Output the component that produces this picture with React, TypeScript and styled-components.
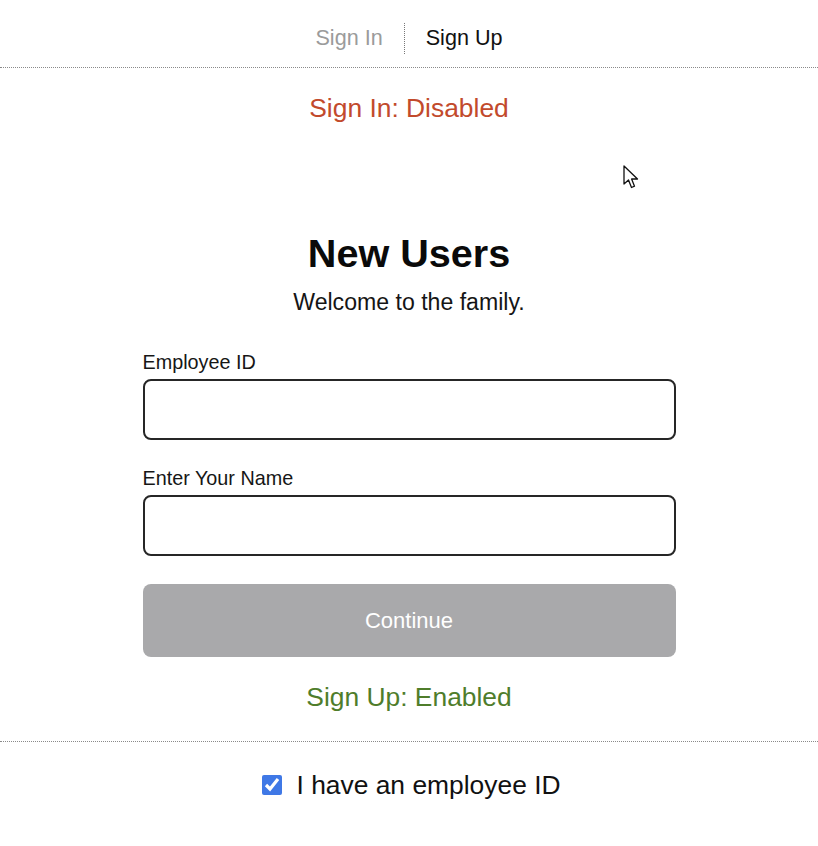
import React, { useState } from "react";
import styled, { createGlobalStyle } from "styled-components";

const Global = createGlobalStyle`
  html, body { margin: 0; padding: 0; background: #ffffff; }
  body { font-family: "Liberation Sans", Arial, sans-serif; color: #111; }
  * { box-sizing: border-box; }
`;

const Page = styled.div`
  position: relative;
  width: 818px;
  min-height: 846px;
  display: flex;
  flex-direction: column;
  align-items: stretch;
`;

const TabBar = styled.nav`
  height: 68px;
  padding-top: 9px;
  display: flex;
  justify-content: center;
  align-items: center;
  border-bottom: 1px dotted #8a8a8a;
`;

const Tab = styled.span<{ $active?: boolean }>`
  font-size: 21.6px;
  line-height: 26px;
  padding: 0 21px;
  color: ${(p) => (p.$active ? "#111111" : "#9b9b9b")};
`;

const TabDivider = styled.span`
  width: 0;
  height: 31px;
  border-left: 1px dotted #777;
`;

const Status = styled.div<{ $tone: "red" | "green" }>`
  text-align: center;
  font-size: 26.4px;
  line-height: 30px;
  color: ${(p) => (p.$tone === "red" ? "#c24a2c" : "#4f7d2b")};
`;

const Main = styled.main`
  display: flex;
  flex-direction: column;
  align-items: center;
  padding-top: 25px;
  padding-bottom: 29px;
  border-bottom: 1px dotted #8a8a8a;
`;

const Title = styled.h1`
  margin: 107px 0 0;
  font-size: 39.6px;
  line-height: 46px;
  font-weight: 700;
  color: #0a0a0a;
`;

const Subtitle = styled.p`
  margin: 13px 0 0;
  font-size: 23.1px;
  line-height: 26px;
  color: #151515;
`;

const Form = styled.form`
  width: 533px;
  margin-top: 36px;
  display: flex;
  flex-direction: column;
`;

const Field = styled.label`
  display: flex;
  flex-direction: column;
  gap: 5px;
  margin-bottom: 27px;
`;

const FieldLabel = styled.span`
  font-size: 19.8px;
  line-height: 23px;
  color: #161616;
`;

const Input = styled.input`
  height: 61px;
  width: 100%;
  border: 2px solid #262626;
  border-radius: 8px;
  background: #fff;
  font-size: 20px;
  padding: 0 14px;
  outline: none;
`;

const Button = styled.button`
  height: 73px;
  width: 100%;
  margin-top: 1px;
  border: none;
  border-radius: 8px;
  background: #a9a9ab;
  color: #ffffff;
  font-family: "Liberation Sans", Arial, sans-serif;
  font-size: 22px;
  cursor: default;
`;

const StatusSpacer = styled.div`
  height: 25px;
`;

const CheckRow = styled.label`
  display: flex;
  justify-content: center;
  align-items: center;
  gap: 14px;
  height: 86px;
  padding-left: 5px;
  font-size: 26.4px;
  color: #111;
`;

const Check = styled.input`
  width: 20px;
  height: 20px;
  margin: 0;
  accent-color: #3f78e6;
`;

const Cursor = styled.svg`
  position: absolute;
  left: 623px;
  top: 165px;
  width: 18px;
  height: 26px;
  pointer-events: none;
`;

export default function App() {
  const [hasId, setHasId] = useState(true);
  return (
    <Page>
      <Global />
      <TabBar>
        <Tab>Sign In</Tab>
        <TabDivider />
        <Tab $active>Sign Up</Tab>
      </TabBar>
      <Main>
        <Status $tone="red">Sign In: Disabled</Status>
        <Title>New Users</Title>
        <Subtitle>Welcome to the family.</Subtitle>
        <Form onSubmit={(e) => e.preventDefault()}>
          <Field>
            <FieldLabel>Employee ID</FieldLabel>
            <Input type="text" />
          </Field>
          <Field>
            <FieldLabel>Enter Your Name</FieldLabel>
            <Input type="text" />
          </Field>
          <Button type="submit" disabled>
            Continue
          </Button>
        </Form>
        <StatusSpacer />
        <Status $tone="green">Sign Up: Enabled</Status>
      </Main>
      <CheckRow>
        <Check type="checkbox" checked={hasId} onChange={(e) => setHasId(e.target.checked)} />
        I have an employee ID
      </CheckRow>
      <Cursor viewBox="0 0 18 26">
        <path
          d="M1 1 L1 19 L5.5 15 L8.5 22.5 L11.5 21.2 L8.6 14 L14.5 14 Z"
          fill="#ffffff"
          stroke="#111"
          strokeWidth="1.3"
          strokeLinejoin="round"
        />
      </Cursor>
    </Page>
  );
}
